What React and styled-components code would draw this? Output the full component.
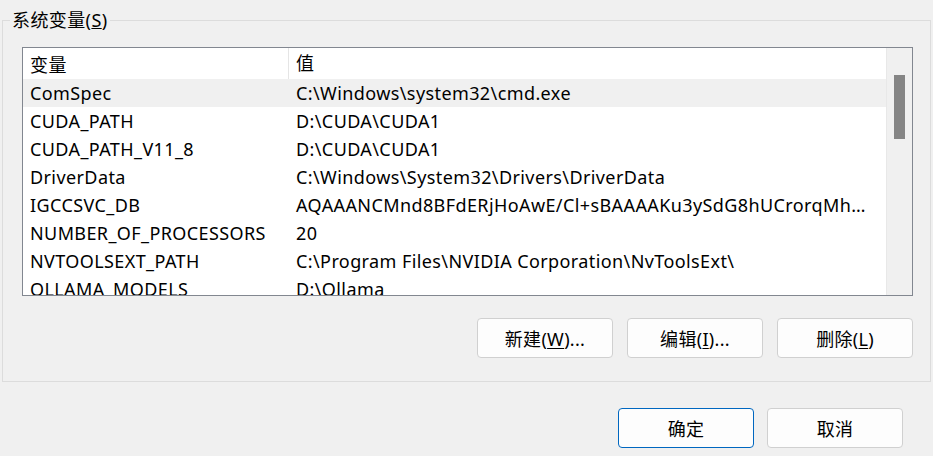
import styled, { createGlobalStyle } from "styled-components";

const GlobalStyle = createGlobalStyle`
  html, body {
    margin: 0;
    padding: 0;
    background: #f0f0f0;
  }
  body {
    font-family: "Noto Sans", "Noto Sans CJK SC", sans-serif;
    font-size: 18px;
    letter-spacing: 0.4px;
    color: #000;
  }
`;

const vars = [
  ["ComSpec", "C:\\Windows\\system32\\cmd.exe"],
  ["CUDA_PATH", "D:\\CUDA\\CUDA1"],
  ["CUDA_PATH_V11_8", "D:\\CUDA\\CUDA1"],
  ["DriverData", "C:\\Windows\\System32\\Drivers\\DriverData"],
  ["IGCCSVC_DB", "AQAAANCMnd8BFdERjHoAwE/Cl+sBAAAAKu3ySdG8hUCrorqMhxZGJ0AAAAAAACgAAAAAAAQZgAAAAEAACAAAA"],
  ["NUMBER_OF_PROCESSORS", "20"],
  ["NVTOOLSEXT_PATH", "C:\\Program Files\\NVIDIA Corporation\\NvToolsExt\\"],
  ["OLLAMA_MODELS", "D:\\Ollama"],
  ["OneDrive", "C:\\Users\\Public\\OneDrive"],
];

export default function App() {
  return (
    <>
      <GlobalStyle />
      <Page>
        <Group>
          <Legend>系统变量(<u>S</u>)</Legend>
          <List>
            <Rows>
              <Header>
                <Cell $first>变量</Cell>
                <Cell>值</Cell>
              </Header>
              {vars.map((v, i) => (
                <Row key={v[0]} $selected={i === 0}>
                  <Cell $first>{v[0]}</Cell>
                  <Cell>{v[1]}</Cell>
                </Row>
              ))}
            </Rows>
            <ScrollBar>
              <Thumb />
            </ScrollBar>
          </List>
          <ButtonRow>
            <Button>新建(<u>W</u>)...</Button>
            <Button>编辑(<u>I</u>)...</Button>
            <Button>删除(<u>L</u>)</Button>
          </ButtonRow>
        </Group>
        <Footer>
          <Button $primary>确定</Button>
          <Button>取消</Button>
        </Footer>
      </Page>
    </>
  );
}

const Page = styled.div`
  width: 933px;
  height: 456px;
  box-sizing: border-box;
  padding: 20px 2px 0 2px;
  overflow: hidden;
`;

const Group = styled.div`
  position: relative;
  border: 1px solid #dcdcdc;
  height: 362px;
  box-sizing: border-box;
  padding: 26px 17px 0 19px;
`;

const Legend = styled.span`
  position: absolute;
  top: -13px;
  left: 7px;
  padding: 0 2px;
  background: #f0f0f0;
  line-height: 24px;
  white-space: nowrap;
`;

const List = styled.div`
  display: flex;
  height: 249px;
  border: 1px solid #828790;
  box-sizing: border-box;
  background: #fff;
  overflow: hidden;
`;

const Rows = styled.div`
  flex: 1;
  min-width: 0;
  display: flex;
  flex-direction: column;
`;

const Header = styled.div`
  display: flex;
  flex: none;
  height: 31px;
  align-items: stretch;
`;

const Row = styled.div`
  display: flex;
  flex: none;
  height: 28px;
  align-items: stretch;
  background: ${(p) => (p.$selected ? "#f0f0f0" : "#fff")};
`;

const Cell = styled.div`
  display: flex;
  align-items: center;
  box-sizing: border-box;
  padding: 0 8px 0 7px;
  white-space: nowrap;
  overflow: hidden;
  text-overflow: ellipsis;
  ${(p) =>
    p.$first
      ? `width: 266px; flex: none;`
      : `flex: 1; min-width: 0; display: block; line-height: 28px; padding-right: 16px;`}
  ${Header} & {
    border-right: 1px solid #e5e5e5;
  }
  ${Header} &:last-child {
    border-right: none;
    line-height: 31px;
  }
`;

const ScrollBar = styled.div`
  width: 26px;
  flex: none;
  background: #f0f0f0;
  border-left: 1px solid #e8e8e8;
  box-sizing: border-box;
  padding: 27px 0 0 7px;
`;

const Thumb = styled.div`
  width: 11px;
  height: 64px;
  background: #858585;
`;

const ButtonRow = styled.div`
  display: flex;
  justify-content: flex-end;
  gap: 14px;
  margin-top: 22px;
`;

const Footer = styled.div`
  display: flex;
  justify-content: flex-end;
  gap: 13px;
  padding: 26px 28px 0 0;
`;

const Button = styled.button`
  width: 136px;
  height: 40px;
  box-sizing: border-box;
  border-radius: 4px;
  border: 1px solid ${(p) => (p.$primary ? "#0067c0" : "#d0d0d0")};
  background: #fdfdfd;
  font-family: "Noto Sans", "Noto Sans CJK SC", sans-serif;
  font-size: 18px;
  letter-spacing: 0.3px;
  color: #000;
  padding: 0;
  u {
    text-decoration-thickness: 1px;
    text-underline-offset: 2px;
  }
`;
